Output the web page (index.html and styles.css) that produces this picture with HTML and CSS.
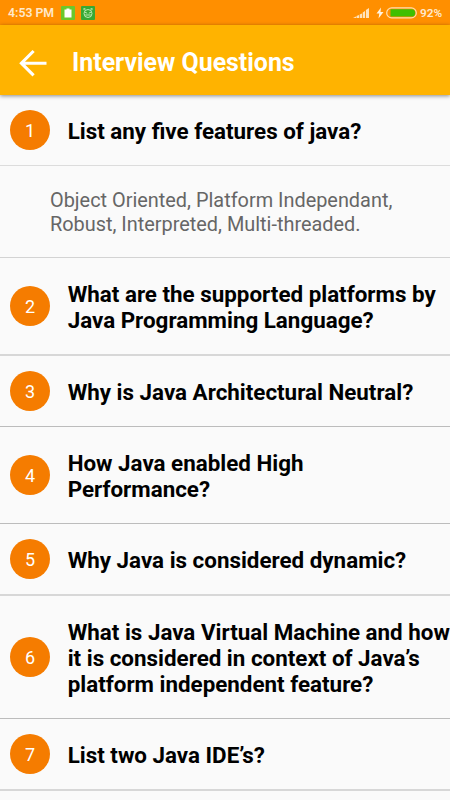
FILE: index.html
```html
<!DOCTYPE html>
<html lang="en">
<head>
<meta charset="utf-8">
<title>Interview Questions</title>
<link rel="stylesheet" href="styles.css">
</head>
<body>
<div class="status">
  <span class="time">4:53 PM</span>
  <svg class="app-icon" width="14" height="14" viewBox="0 0 14 14"><rect width="14" height="14" rx="1" fill="#6bc72d"/><path d="M3.500 3.500H5.500V2.500H8.500V3.500H10.500V11.500H3.500Z" fill="#fff"/></svg>
  <svg class="app-icon second" width="14" height="14" viewBox="0 0 14 14"><rect width="14" height="14" rx="1" fill="#38a832"/><g fill="none" stroke="#c9f0c0" stroke-width=".9"><ellipse cx="7" cy="7.500" rx="4" ry="4"/><path d="M3.200 4.200L2.800 2.600L4.600 3M10.800 4.200L11.200 2.600L9.400 3M4 6.200L6.200 7.200M10 6.200L7.800 7.200M4.200 9H9.800"/></g></svg>
  <span class="spacer"></span>
  <svg class="signal" width="17" height="12" viewBox="0 0 17 12" fill="#ffe3bd"><path d="M0 11L3 9.500V11ZM3.500 9L6 8V11H3.500ZM6.700 7.500L9 6.500V11H6.700ZM9.700 5.500L12 4V11H9.700ZM12.900 3L16 1V11H12.900Z"/></svg>
  <svg class="bolt" width="8" height="12" viewBox="0 0 8 12" fill="#fff3df"><path d="M5 .5L.5 6.500H3.300L2.500 11.500L7.500 5H4.500Z"/></svg>
  <svg class="battery" width="31" height="12" viewBox="0 0 31 12"><rect x=".7" y=".9" width="29.600" height="10" rx="5" fill="none" stroke="#ffe0b0" stroke-width="1.200"/><path d="M4.500 2.200H25.500A3.700 3.700 0 0 1 25.500 9.600H4.500Z" fill="#3fbf00"/></svg>
  <span class="percent">92%</span>
</div>
<header class="appbar">
  <svg class="back" width="28" height="28" viewBox="0 0 28 28" fill="none" stroke="#fff" stroke-width="3.100"><path d="M27.500 14.200H3M14.600 2L2.400 14.200L14.600 26.400"/></svg>
  <h1>Interview Questions</h1>
</header>
<main>
  <section class="row"><span class="num">1</span><h2>List any five features of java?</h2></section>
  <p class="answer">Object Oriented, Platform Independant,<br>Robust, Interpreted, Multi-threaded.</p>
  <section class="row double soft"><span class="num">2</span><h2>What are the supported platforms by<br>Java Programming Language?</h2></section>
  <section class="row"><span class="num">3</span><h2>Why is Java Architectural Neutral?</h2></section>
  <section class="row double"><span class="num">4</span><h2>How Java enabled High<br>Performance?</h2></section>
  <section class="row tall soft"><span class="num">5</span><h2>Why Java is considered dynamic?</h2></section>
  <section class="row triple"><span class="num">6</span><h2>What is Java Virtual Machine and how<br>it is considered in context of Java’s<br>platform independent feature?</h2></section>
  <section class="row tall soft"><span class="num">7</span><h2>List two Java IDE’s?</h2></section>
</main>
</body>
</html>
```
FILE: styles.css
```css
* { box-sizing: border-box; margin: 0; padding: 0; }
body {
  width: 450px;
  height: 800px;
  overflow: hidden;
  background: #fafafa;
  font-family: Roboto, "Liberation Sans", sans-serif;
}
svg { display: block; flex: none; }
.status {
  display: flex;
  align-items: center;
  height: 25px;
  padding: 0 8px;
  background: #ff8f00;
  color: #ffe9cc;
  font-size: 12px;
  font-weight: 600;
  white-space: nowrap;
}
.time { width: 52.5px; font-size: 12.3px; }
.second { margin-left: 6px; }
.spacer { flex: 1; }
.signal { margin-right: 6px; }
.bolt { margin-right: 2px; }
.percent { width: 22px; margin-left: 3px; font-size: 11.8px; }
.appbar {
  position: relative;
  display: flex;
  align-items: center;
  height: 70px;
  padding: 5px 0 0 19px;
  background: #ffb300;
  box-shadow: 0 1px 4px rgba(0, 0, 0, .45);
}
.appbar h1 {
  margin-left: 25px;
  color: #fff;
  font-size: 24.9px;
  font-weight: 700;
  line-height: 30px;
  white-space: nowrap;
}
.row {
  display: flex;
  align-items: center;
  height: 71px;
  padding-left: 10px;
  border-bottom: 1px solid #bcbcbc;
}
.row:first-child { border-color: #dcdcdc; }
.double { height: 97px; }
.triple { height: 123px; }
.tall { height: 72px; }
.soft { border-bottom: 2px solid #d7d7d7; }
.double.soft { height: 98px; }
.num {
  flex: none;
  width: 40px;
  height: 40px;
  border-radius: 50%;
  background: #f57c00;
  color: #fff;
  font-size: 18px;
  line-height: 41px;
  text-align: center;
}
.row h2 {
  margin-left: 17.7px;
  padding-top: 2px;
  color: #000;
  font-size: 22.38px;
  font-weight: 700;
  line-height: 26.2px;
  white-space: nowrap;
}
.answer {
  height: 92px;
  padding: 23px 0 0 50px;
  border-bottom: 1px solid #d3d3d3;
  color: #666;
  font-size: 19.9px;
  line-height: 24px;
  white-space: nowrap;
}
```
